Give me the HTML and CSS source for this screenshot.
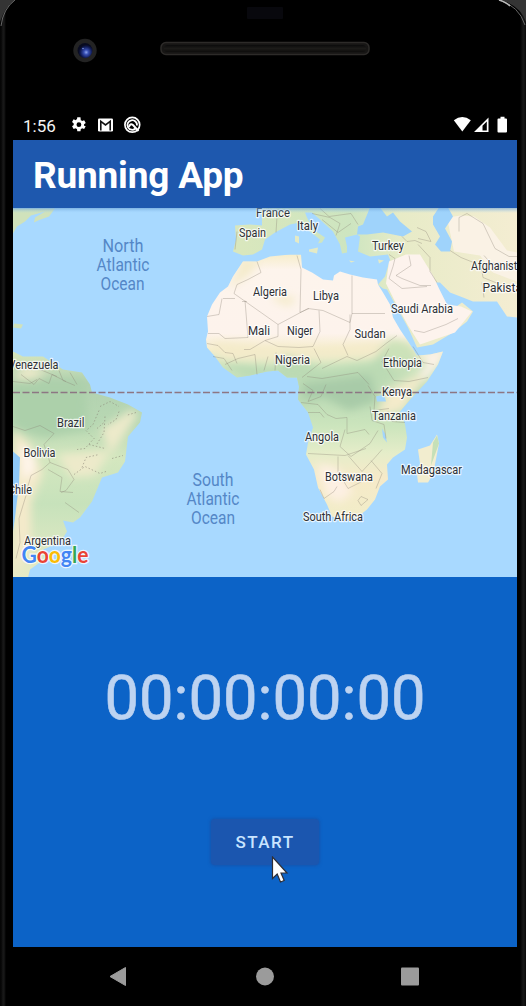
FILE: index.html
```
<!DOCTYPE html>
<html lang="en">
<head>
<meta charset="utf-8">
<title>Running App</title>
<link rel="stylesheet" href="styles.css">
</head>
<body>
<div class="phone">
  <header class="bezel">
    <svg class="hardware" viewBox="0 0 526 110">
      <defs>
        <radialGradient id="lens" cx=".58" cy=".62"><stop offset="0" stop-color="#8ea6ee"/><stop offset=".3" stop-color="#3850b5"/><stop offset=".75" stop-color="#101b55"/><stop offset="1" stop-color="#080b20"/></radialGradient>
        <linearGradient id="grille" x2="0" y2="1"><stop offset="0" stop-color="#0b0b0b"/><stop offset=".5" stop-color="#1c1b19"/><stop offset="1" stop-color="#0e0d0c"/></linearGradient>
      </defs>
      <path d="M0 0H15Q4 8 0 22ZM526 0H500Q520 5 526 22Z" fill="#343434"/>
      <path d="M15 0Q3 9 1 26M499 0Q519 6 525 25" fill="none" stroke="#666" stroke-width="1"/>
      <path d="M499 0Q506 2 510 6" fill="none" stroke="#bbb" stroke-width="1.500"/>
      <rect x="247" y="7" width="36" height="12" rx="1" fill="#08080d"/>
      <circle cx="85" cy="50.500" r="11.700" fill="#232323"/>
      <circle cx="85" cy="50.500" r="7.500" fill="url(#lens)"/>
      <circle cx="83" cy="48.500" r=".8" fill="#7990e3"/>
      <rect x="161" y="42.500" width="208" height="12" rx="5" fill="#171615" stroke="#2d2b29" stroke-width="1.500"/>
      <rect x="164" y="45" width="202" height="7" rx="3.500" fill="url(#grille)"/>
    </svg>
  </header>
  <main class="screen">
    <div class="status">
      <span class="clock">1:56</span>
      <svg class="notices" viewBox="70 116 72 18" fill="#fff">
        <g transform="translate(68.500 115.400) scale(.8)"><path d="M19.430 12.980c.04-.32.07-.64.07-.98s-.03-.66-.07-.98l2.110-1.650-2-3.460-2.490 1a7.300 7.300 0 0 0-1.690-.98L14.980 2.280h-4l-.38 2.650c-.61.25-1.170.59-1.690.98l-2.490-1-2 3.460 2.110 1.650a8 8 0 0 0 0 1.960l-2.110 1.650 2 3.460 2.490-1c.52.4 1.080.73 1.690.98l.38 2.650h4l.38-2.650c.61-.25 1.170-.59 1.690-.98l2.490 1 2-3.460zM13 14.600a3 3 0 1 1 0-6 3 3 0 0 1 0 6z" fill-rule="evenodd"/></g>
        <rect x="98" y="118.500" width="15" height="13" rx="1.300"/>
        <path d="M100.800 130.500V121.300L105.500 125L110.200 121.300V130.500" fill="none" stroke="#111" stroke-width="1.600"/>
        <circle cx="132.300" cy="124.800" r="7.400" fill="none" stroke="#fff" stroke-width="1.700"/>
        <path d="M135.500 128.500A4.800 4.800 0 1 1 137 125.500" fill="none" stroke="#fff" stroke-width="1.800"/>
        <path d="M129 127Q130 123 133 125L138.500 131" fill="none" stroke="#fff" stroke-width="2"/>
      </svg>
      <svg class="signals" viewBox="452 116 56 18" fill="#fff">
        <path d="M451.500 120.200Q460 113.700 468.500 120.200L460 131.500Z" transform="translate(2.300 0)"/>
        <path d="M474 132L488.500 117.500V132ZM482.500 125.800V130.500H486.800V121.500Z" fill-rule="evenodd"/>
        <path d="M500.500 116.800h4v1.700h1.500q1 0 1 1v12q0 1-1 1h-7.500q-1 0-1-1v-12q0-1 1-1h2z"/>
      </svg>
    </div>
    <div class="appbar"><h1>Running App</h1></div>
    <svg class="map" viewBox="13 208.500 504 369" preserveAspectRatio="none">
      <defs>
        <linearGradient id="africaFill" gradientUnits="userSpaceOnUse" x1="0" y1="254" x2="0" y2="520">
          <stop offset="0" stop-color="#f6edc9"/><stop offset=".06" stop-color="#fdf4ec"/><stop offset=".3" stop-color="#fdf3ec"/><stop offset=".36" stop-color="#f5edcc"/><stop offset=".43" stop-color="#cfe5bf"/><stop offset=".53" stop-color="#bbdab5"/><stop offset=".65" stop-color="#cce5bd"/><stop offset=".75" stop-color="#e5edc9"/><stop offset=".84" stop-color="#f6eac9"/><stop offset="1" stop-color="#f1edc8"/>
        </linearGradient>
        <linearGradient id="americaFill" gradientUnits="userSpaceOnUse" x1="0" y1="350" x2="0" y2="577">
          <stop offset="0" stop-color="#d9e7bd"/><stop offset=".15" stop-color="#b2d1b0"/><stop offset=".33" stop-color="#b8d8b3"/><stop offset=".48" stop-color="#d4e7bf"/><stop offset=".68" stop-color="#c7e2bb"/><stop offset="1" stop-color="#e8ebc6"/>
        </linearGradient>
        <linearGradient id="euroFill" gradientUnits="userSpaceOnUse" x1="240" y1="0" x2="517" y2="0">
          <stop offset="0" stop-color="#d9e7bd"/><stop offset=".4" stop-color="#cde5c0"/><stop offset=".58" stop-color="#e7ebc7"/><stop offset="1" stop-color="#f4edd2"/>
        </linearGradient>
        <linearGradient id="barShade" x2="0" y2="1"><stop offset="0" stop-color="#6098cf" stop-opacity=".6"/><stop offset="1" stop-color="#9bd0fa" stop-opacity="0"/></linearGradient>
        <filter id="soft" x="-30%" y="-30%" width="160%" height="160%"><feGaussianBlur stdDeviation="4"/></filter>
        <clipPath id="africaClip"><path d="M243 262L233 277 228 287 220 293 212 305 207 317 208 332 206 340 207 348 215 357 223 368 237 378 250 376 267 372 278 371 287 378 297 378 299 387 298 400 308 413 313 428 308 443 306 455 314 470 318 488 327 505 332 517 340 520 357 518 367 510 375 500 380 487 388 480 387 465 393 458 405 450 407 438 405 425 400 412 412 398 427 382 438 365 443 352 430 355 417 356 408 342 400 330 393 318 390 305 383 293 378 285 377 280 363 278 350 275 340 272 334 276 333 281 323 280 312 273 302 268 301 255 290 255 270 257 257 262Z"/></clipPath>
        <clipPath id="americaClip"><path d="M13 352L23 357 43 357 63 370 82 373 90 385 92 393 110 398 128 405 142 413 140 423 128 437 125 462 118 473 102 478 92 502 80 518 73 523 63 521 67 532 60 543 43 550 44 560 30 570 28 578H13Z"/></clipPath>
      </defs>
      <rect x="13" y="208" width="504" height="370" fill="#a8d9ff"/>
      <path d="M13 209H55L49 217 38 221 34 223 35 218 45 212 31 216 25 222 17 227 13 234ZM14 324L23 325 21 329 13 328Z" fill="#d0e2bb"/>
      <g clip-path="url(#americaClip)">
        <rect x="13" y="345" width="132" height="233" fill="url(#americaFill)"/>
        <g filter="url(#soft)">
          <path d="M26 366L48 373 25 383 10 382M101 430L132 410 138 415 111 455ZM58 455L110 451 95 476 71 478Z" fill="#edeaca"/>
          <path d="M13 430L30 444 43 473 31 503 31 550 13 577Z" fill="#f4eacb"/>
          <path d="M20 445L34 456 35 471 23 481Z" fill="#fff5eb"/>
          <path d="M13 380L85 380 88 430 45 438 13 428Z" fill="#acd0aa"/>
        </g>
      </g>
      <path d="M13 452L20 458 19 485 15 518 13 532Z" fill="#8ec8f8"/>
      <path d="M257 208L262 215 262 226 250 225 235 226 236 240 233 252 243 256 253 255 262 250 265 240 275 233 290 225 300 223 310 232 320 240 318 244 322 243 325 238 313 230 307 218 305 213 312 213 320 220 333 232 340 245 342 254 347 253 347 247 345 238 357 235 360 237 358 252 370 257 388 255 390 260 385 277 378 285 383 289 387 290 397 308 408 328 417 348 433 345 453 333 467 322 473 312 462 303 455 308 447 305 440 295 433 283 440 283 450 293 463 298 473 302 497 302 507 317 517 318V208Z" fill="url(#euroFill)"/>
      <path d="M389 262L406 255 420 255 433 276 439 289 447 305 461 307 472 312 455 333 420 345 408 326 395 302 386 284Z" fill="#fdf3ed"/>
      <path d="M447 218L461 216 474 217 490 228 507 251 517 253V282L493 273 480 256 454 252Z" fill="#faf2e5"/>
      <path d="M370 208L363 225 358 227 357 235 367 235 383 233 403 237 412 232 400 222 393 213 387 217 380 208ZM439 208L433 217 433 225 440 237 435 245 441 252 450 252 452 242 445 229 453 217 448 208Z" fill="#9fd3fb"/>
      <g clip-path="url(#africaClip)">
        <rect x="200" y="250" width="250" height="275" fill="url(#africaFill)"/>
        <g filter="url(#soft)">
          <path d="M243 258L260 263 248 276 228 290ZM276 296L297 298 289 307 272 300ZM210 342L260 348 320 350 381 343 386 353 330 358 225 360ZM425 372L438 365 415 391 405 410 380 418 379 395Z" fill="#f4ebca"/>
          <path d="M215 362L275 370 286 356 322 370 373 363 385 345 417 355 405 374 377 390 387 402 350 410 321 397 300 406 297 384 246 378Z" fill="#bbdab4"/>
          <path d="M302 384L370 375 377 401 349 411 323 397 303 401Z" fill="#a8cba8"/>
          <path d="M389 339L410 343 416 354 398 374 382 359Z" fill="#cce2b9"/>
          <path d="M420 354L445 350 438 366 426 380 419 374 429 363Z" fill="#fdf2e9"/>
          <path d="M317 464L336 468 353 492 340 503 327 497Z" fill="#fdf0e3"/>
        </g>
      </g>
      <path d="M430 446L437 435 439 444 433 475 428 483 418 483 417 475 420 464 418 450Z" fill="#f2edcf"/>
      <path d="M437 436L439 444 431 466 433 443Z" fill="#c5e0b8"/>
      <path d="M295 236L299 237 299 244 295 242ZM309 250L318 248 317 254 309 252ZM349 261L355 262 351 263ZM378 260L384 261 379 264Z" fill="#e4eac6"/>
      <path d="M376 397L384 395 386 402 377 402ZM382 429L385 434 387 443 383 438Z" fill="#a3d5fc"/>
      <g class="borders">
        <path d="M257 262L261 273 248 280 237 285 234 294 278 325 308 309 323 311 350 323 352 314M297 256L301 270 300 313 309 309M352 276V314H385M350 315V330L343 345 348 356M245 301L248 338 225 339 219 334H208M278 325L278 337 265 341 250 350 244 350M319 311L320 332 313 347 299 348 278 347 265 341M223 299H235M222 299L219 315 207 317M247 302H242M314 349L321 363 302 378M322 369L347 357 357 361 376 352 386 344 397 336M307 377L322 379 358 373 369 385M389 349L382 362 394 381 409 382 428 378M413 347L423 363 434 365M207 344L218 346 225 353 233 354 237 364M225 365L238 359 255 355 257 375M268 357L264 371M276 353L275 371M213 357L224 359 232 371"/>
        <path d="M301 403L318 405 327 415 336 419 347 418 347 434 365 430 369 435M308 413L320 413 324 418M308 454L345 456 366 449M345 430L340 447 351 457 370 444 378 431M338 457L338 472 348 489 362 482M348 456L362 472 375 458 382 450M320 490L324 499 334 492 337 487M361 497L368 500 361 506 358 501ZM388 412L392 422 405 423M370 407L372 421 384 425 386 439M371 461L382 474 376 489M303 384L313 391 308 402 321 397 326 385M368 386L375 397 374 411 389 409"/>
        <path d="M389 255L395 259 393 267 389 279 402 289 427 287M409 256L411 266 396 276 402 279 420 286 431 286M418 245L430 258 430 272 437 283M418 239L431 242 426 232 417 228M450 251L461 258 481 266 483 278 498 284 503 292M459 232V218L467 214 483 224 495 249 509 257 517 257M484 256L491 264 501 263M482 283L484 298M414 331L424 333 446 325 458 319M402 237L407 242 415 241 422 244M312 214L330 218 340 224 336 236M320 209L329 217 351 214 358 225M268 209L277 217 276 233M322 220L338 233 351 224M237 232L235 250"/>
        <path d="M13 427L25 431 40 426 54 434 44 445 50 463 42 470 31 476 27 490M50 463L68 470 74 480 66 491 61 493M48 470L62 478 60 492 73 493M21 375L34 385 39 379 49 384 52 375 66 382M40 370L57 377M13 382L30 384 37 380M65 503L79 513M26 496L19 519 20 543 16 559M59 371L63 381 75 386M70 373L77 385"/>
        <path class="states" d="M99 411L93 425 86 431 94 439 85 449 77 450M105 417L104 433 96 446M119 412L116 420 108 425M136 413L126 416M89 445L105 449M74 475L85 467 100 474 106 472M100 407L110 402 119 407M97 429L104 423M112 459L123 456M82 468L86 458 99 455"/>
      </g>
      <path d="M13 393H517" stroke="#8d7683" stroke-width="1.300" stroke-dasharray="7 2.500"/>
      <g class="ocean">
        <text x="102.500" y="252.500" textLength="41" lengthAdjust="spacingAndGlyphs">North</text><text x="96.500" y="271.500" textLength="53" lengthAdjust="spacingAndGlyphs">Atlantic</text><text x="100.500" y="290.500" textLength="44" lengthAdjust="spacingAndGlyphs">Ocean</text>
        <text x="192.500" y="486" textLength="41" lengthAdjust="spacingAndGlyphs">South</text><text x="186.500" y="505" textLength="53" lengthAdjust="spacingAndGlyphs">Atlantic</text><text x="191" y="524" textLength="44" lengthAdjust="spacingAndGlyphs">Ocean</text>
      </g>
      <g class="countries">
        <text x="256" y="217" textLength="34" lengthAdjust="spacingAndGlyphs">France</text><text x="239" y="237.500" textLength="27" lengthAdjust="spacingAndGlyphs">Spain</text><text x="297" y="230.500" textLength="21" lengthAdjust="spacingAndGlyphs">Italy</text><text x="372" y="250.500" textLength="32" lengthAdjust="spacingAndGlyphs">Turkey</text><text x="471" y="270.500" textLength="58" lengthAdjust="spacingAndGlyphs">Afghanistan</text><text x="482.500" y="292.500" textLength="46" lengthAdjust="spacingAndGlyphs">Pakistan</text><text x="253" y="296" textLength="34" lengthAdjust="spacingAndGlyphs">Algeria</text><text x="313" y="300" textLength="26" lengthAdjust="spacingAndGlyphs">Libya</text><text x="391" y="313" textLength="62" lengthAdjust="spacingAndGlyphs">Saudi Arabia</text><text x="248" y="335" textLength="22" lengthAdjust="spacingAndGlyphs">Mali</text><text x="287" y="335" textLength="26" lengthAdjust="spacingAndGlyphs">Niger</text><text x="354.500" y="338" textLength="31" lengthAdjust="spacingAndGlyphs">Sudan</text><text x="275" y="364.500" textLength="35" lengthAdjust="spacingAndGlyphs">Nigeria</text><text x="383" y="367.500" textLength="39" lengthAdjust="spacingAndGlyphs">Ethiopia</text><text x="382" y="396" textLength="30" lengthAdjust="spacingAndGlyphs">Kenya</text><text x="372" y="420" textLength="44" lengthAdjust="spacingAndGlyphs">Tanzania</text><text x="305" y="441" textLength="34" lengthAdjust="spacingAndGlyphs">Angola</text><text x="325" y="481.500" textLength="48" lengthAdjust="spacingAndGlyphs">Botswana</text><text x="401" y="474" textLength="61" lengthAdjust="spacingAndGlyphs">Madagascar</text><text x="303" y="521.500" textLength="60" lengthAdjust="spacingAndGlyphs">South Africa</text><text x="8.500" y="369" textLength="50" lengthAdjust="spacingAndGlyphs">Venezuela</text><text x="57" y="427.500" textLength="27.500" lengthAdjust="spacingAndGlyphs">Brazil</text><text x="23.500" y="457" textLength="32" lengthAdjust="spacingAndGlyphs">Bolivia</text><text x="8" y="494" textLength="24" lengthAdjust="spacingAndGlyphs">Chile</text><text x="24" y="545" textLength="47" lengthAdjust="spacingAndGlyphs">Argentina</text>
      </g>
      <text class="google" x="21.500" y="563.500" textLength="67" lengthAdjust="spacingAndGlyphs"><tspan fill="#4285f4">G</tspan><tspan fill="#ea4335">o</tspan><tspan fill="#fbbc05">o</tspan><tspan fill="#4285f4">g</tspan><tspan fill="#34a853">l</tspan><tspan fill="#ea4335">e</tspan></text>
      <rect x="13" y="208.500" width="504" height="5" fill="url(#barShade)"/>
    </svg>
    <section class="tracker">
      <div class="timer">00:00:00:00</div>
      <button class="start">START</button>
    </section>
  </main>
  <nav class="navbar">
    <svg viewBox="0 0 526 59" fill="#9b9b9b">
      <path d="M110 29.500L125.500 20.500V38.500Z" stroke="#9b9b9b" stroke-linejoin="round"/><circle cx="265" cy="29.500" r="9"/><rect x="401" y="20.500" width="18" height="18" rx="1"/>
    </svg>
  </nav>
  <svg class="cursor" viewBox="0 0 18 28"><path d="M1.500 1V22.500L6.200 18 9.500 26 13.200 24.500 10 17H16Z" fill="#fff" stroke="#302f35" stroke-width="1.200"/></svg>
</div>
</body>
</html>
```
FILE: styles.css
```
* { box-sizing: border-box; }
body { margin: 0; background: #000; font-family: Roboto, sans-serif; }
svg { display: block; }
.phone {
  position: relative;
  width: 526px;
  height: 1006px;
  overflow: hidden;
  background: linear-gradient(90deg, #060606 0 1px, #181818 3px 4px, #000 6px 520px, #161616 523px 524px, #080808 526px);
}
.bezel, .hardware { width: 526px; height: 110px; }
.screen { width: 504px; height: 837px; margin-left: 13px; }
.status { height: 30px; display: flex; align-items: center; padding: 0 9px 0 10px; color: #f5f5f5; }
.clock { width: 47px; font-size: 17px; line-height: 20px; padding-top: 1px; }
.notices { width: 72px; height: 18px; }
.signals { width: 56px; height: 18px; margin-left: auto; }
.appbar { height: 68px; display: flex; align-items: center; padding: 3px 20px 0; background: #1e58ae; color: #fff; }
h1 { margin: 0; font-size: 37px; line-height: 44px; font-weight: 700; letter-spacing: -.2px; white-space: nowrap; }
.map { width: 504px; height: 369px; }
.borders { fill: none; stroke: #877f73; stroke-opacity: .42; stroke-width: .8; stroke-linejoin: round; }
.states { stroke-dasharray: 1.5 2; stroke-opacity: .7; }
.ocean { font-size: 18.3px; fill: #5487c7; }
.countries { font-size: 12.4px; font-weight: 400; fill: #2e3035; stroke: #fff; stroke-opacity: .75; stroke-width: 2.5px; stroke-linejoin: round; paint-order: stroke; }
.google { font-family: Lato, sans-serif; font-size: 23px; font-weight: 700; stroke: #fff; stroke-opacity: .8; stroke-width: 2.5px; paint-order: stroke; }
.tracker { height: 370px; display: flex; flex-direction: column; align-items: center; padding-top: 86px; background: #0c63c7; }
.timer { height: 70px; font-size: 61.5px; line-height: 70px; color: #bdd3f1; white-space: nowrap; -webkit-text-stroke: .6px #bdd3f1; }
.start { width: 108px; height: 46px; margin-top: 86px; border: 0; padding: 0; border-radius: 4px; background: #1b56af; box-shadow: 0 0 3px 1px #164fa5aa; color: #c9e5ff; font: 500 17px Roboto, sans-serif; letter-spacing: 1.5px; }
.navbar, .navbar svg { width: 526px; height: 59px; }
.cursor { position: absolute; left: 271px; top: 856px; width: 18px; height: 28px; }
```
